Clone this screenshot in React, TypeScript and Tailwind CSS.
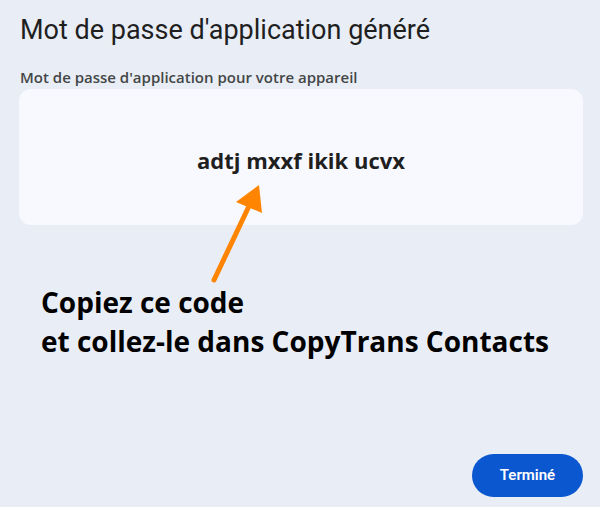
export default function App() {
    return (
        <main className="relative flex h-[507px] w-[600px] flex-col bg-[#e9edf6] pl-[19px] pr-[17px] font-['Roboto',sans-serif]">
            <h1 className="mt-[13px] pl-px text-[27px] leading-[34px] font-normal text-[#1f1f1f]">
                Mot de passe d'application généré
            </h1>
            <p className="mt-[21px] pl-px font-['Open_Sans',sans-serif] text-[15px] leading-[18px] font-semibold text-[#444746]">
                Mot de passe d'application pour votre appareil
            </p>
            <div className="mt-[3px] flex h-[136px] items-center justify-center rounded-xl bg-[#f8f9fe]">
                <span className="mt-[6px] font-['Open_Sans',sans-serif] text-[22px] font-bold text-[#1f1f1f]">adtj mxxf ikik ucvx</span>
            </div>

            <div className="mt-[58px] pl-[22px] font-['Open_Sans',sans-serif] text-[28px] leading-[39px] font-bold text-black">
                <p>Copiez ce code</p>
                <p>et collez-le dans CopyTrans Contacts</p>
            </div>

            <div className="mt-auto mb-[10px] flex justify-end">
                <button className="h-[43px] w-[111px] rounded-full bg-[#0b57d0] text-[15px] font-semibold text-white">
                    Terminé
                </button>
            </div>

            {/* orange arrow pointing at the code */}
            <svg className="pointer-events-none absolute left-0 top-0" width="600" height="507" viewBox="0 0 600 507">
                <line x1="214" y1="280" x2="250" y2="204" stroke="#ff8500" strokeWidth="5" strokeLinecap="round" />
                <polygon points="259,185 236,202 262,213" fill="#ff8500" />
            </svg>
        </main>
    );
}
